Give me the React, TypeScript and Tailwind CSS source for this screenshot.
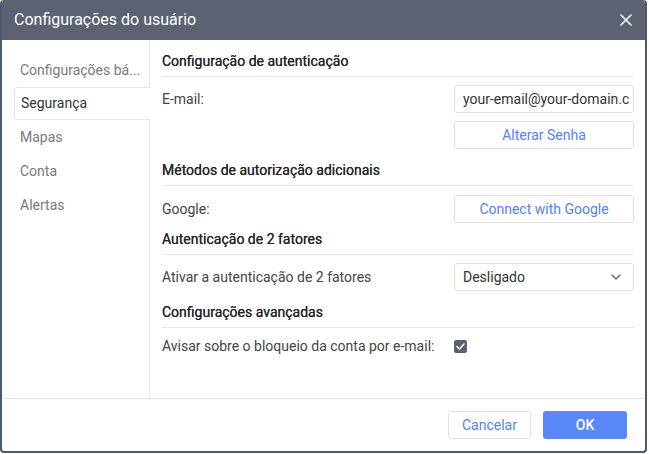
import React from "react";

const font = { fontFamily: "Roboto, 'Noto Sans', sans-serif" };

function Header({ children, className = "" }: { children: React.ReactNode; className?: string }) {
  return (
    <div className={`h-[30px] flex items-center border-b border-[#e3e5e8] text-[14px] text-[#262626] [text-shadow:0_0_0.4px_#262626] ${className}`}>
      {children}
    </div>
  );
}

export default function App() {
  const items = ["Configurações bá...", "Segurança", "Mapas", "Conta", "Alertas"];
  return (
    <div style={font} className="w-[649px] h-[454px] bg-white">
      <div className="w-[647px] h-[453px] border-2 border-t-0 border-[#4c5874] rounded-[4px] overflow-hidden flex flex-col bg-white">
        <div className="h-[40px] bg-[#5c6271] flex items-center justify-between pl-[12px] pr-[12px] shrink-0">
          <span className="text-white text-[16px]">Configurações do usuário</span>
          <svg width="12" height="12" viewBox="0 0 12 12" className="mr-[1px]">
            <path d="M1 1L11 11M11 1L1 11" stroke="white" strokeWidth="1.6" strokeLinecap="round" />
          </svg>
        </div>
        <div className="flex flex-1 min-h-0">
          <div className="w-[148px] border-r border-[#e3e5e8] pt-[13px] shrink-0">
            {items.map((it, i) => (
              <div
                key={it}
                className={
                  i === 1
                    ? "ml-[12px] mr-[-1px] h-[33px] flex items-center pl-[6px] border border-r-0 border-[#e3e5e8] rounded-l-[4px] bg-white text-[14px] text-[#333] relative"
                    : "ml-[12px] h-[34px] flex items-center pl-[6px] text-[14px] text-[#7a7a7a] whitespace-nowrap"
                }
              >
                {it}
              </div>
            ))}
          </div>
          <div className="flex-1 pl-[12px] pr-[11px] pt-[7px]">
            <Header>Configuração de autenticação</Header>
            <div className="mt-[8px] flex justify-between items-center">
              <span className="text-[14px] text-[#444]">E-mail:</span>
              <div className="w-[180px] h-[28px] border border-[#dfe1e5] rounded-[3px] flex items-center pl-[8px] overflow-hidden">
                <span className="text-[14px] text-[#333] whitespace-nowrap">your-email@your-domain.c</span>
              </div>
            </div>
            <div className="mt-[8px] flex justify-end">
              <button className="w-[180px] h-[28px] border border-[#dfe1e5] rounded-[3px] text-[14px] text-[#5183f5] bg-white">
                Alterar Senha
              </button>
            </div>
            <Header className="mt-[7px]">Métodos de autorização adicionais</Header>
            <div className="mt-[9px] flex justify-between items-center">
              <span className="text-[14px] text-[#444]">Google:</span>
              <button className="w-[180px] h-[28px] border border-[#dfe1e5] rounded-[3px] text-[14px] text-[#5183f5] bg-white">
                Connect with Google
              </button>
            </div>
            <Header className="mt-[2px]">Autenticação de 2 fatores</Header>
            <div className="mt-[8px] flex justify-between items-center">
              <span className="text-[14px] text-[#444]">Ativar a autenticação de 2 fatores</span>
              <div className="w-[180px] h-[28px] border border-[#dfe1e5] rounded-[3px] flex items-center justify-between pl-[8px] pr-[12px]">
                <span className="text-[14px] text-[#333]">Desligado</span>
                <svg width="10" height="6" viewBox="0 0 10 6">
                  <path d="M1 1L5 5L9 1" stroke="#666" strokeWidth="1.4" fill="none" strokeLinecap="round" strokeLinejoin="round" />
                </svg>
              </div>
            </div>
            <Header className="mt-[7px]">Configurações avançadas</Header>
            <div className="mt-[9px] h-[18px] flex justify-between items-center">
              <span className="text-[14px] text-[#444]">Avisar sobre o bloqueio da conta por e-mail:</span>
              <div className="w-[180px] flex items-center">
                <div className="w-[13px] h-[13px] rounded-[2px] bg-[#5c6271] flex items-center justify-center">
                  <svg width="9" height="7" viewBox="0 0 9 7">
                    <path d="M1 3.5L3.5 6L8 1" stroke="white" strokeWidth="1.5" fill="none" strokeLinecap="round" strokeLinejoin="round" />
                  </svg>
                </div>
              </div>
            </div>
          </div>
        </div>
        <div className="h-[53px] border-t border-[#e3e5e8] flex items-center justify-end gap-[12px] pr-[18px] shrink-0">
          <button className="w-[83px] h-[28px] border border-[#dfe1e5] rounded-[3px] text-[14px] text-[#5183f5] bg-white">
            Cancelar
          </button>
          <button className="w-[84px] h-[28px] rounded-[3px] text-[14px] font-medium text-white bg-[#5b88f8]">
            OK
          </button>
        </div>
      </div>
    </div>
  );
}
